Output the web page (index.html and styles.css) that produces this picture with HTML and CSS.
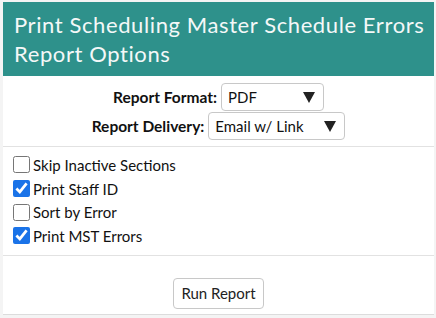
FILE: index.html
```html
<!DOCTYPE html>
<html>
<head>
<meta charset="utf-8">
<link rel="stylesheet" href="styles.css">
</head>
<body>
<div class="panel">
  <div class="header">Print Scheduling Master Schedule Errors<br>Report Options</div>
  <div class="options">
    <div class="row">
      <label class="lbl">Report Format:</label>
      <div class="sel sel-format"><span>PDF</span><span class="arrow"></span></div>
    </div>
    <div class="row">
      <label class="lbl">Report Delivery:</label>
      <div class="sel sel-delivery"><span>Email w/ Link</span><span class="arrow"></span></div>
    </div>
  </div>
  <div class="checks">
    <label class="check"><input type="checkbox"><span>Skip Inactive Sections</span></label>
    <label class="check"><input type="checkbox" checked><span>Print Staff ID</span></label>
    <label class="check"><input type="checkbox"><span>Sort by Error</span></label>
    <label class="check"><input type="checkbox" checked><span>Print MST Errors</span></label>
  </div>
  <div class="actions">
    <button class="btn">Run Report</button>
  </div>
</div>
</body>
</html>
```
FILE: styles.css
```css
html, body {
  margin: 0;
  padding: 0;
}
body {
  background: #f4f4f4;
  font-family: Lato, "Open Sans", sans-serif;
  color: #111;
}
.panel {
  margin: 2px 2px 0 3px;
  width: 431px;
  background: #fff;
  border-bottom: 1px solid #dcdcdc;
}
.header {
  background: #2e918b;
  color: #f4f8f8;
  font-size: 22px;
  line-height: 29px;
  padding: 8px 0 8px 11px;
  height: 58px;
  letter-spacing: 0.6px;
}
.options {
  padding: 7px 0 6px;
  border-bottom: 1px solid #e2e2e2;
  display: flex;
  flex-direction: column;
  align-items: center;
  gap: 1px;
}
.row {
  display: flex;
  align-items: center;
  gap: 4px;
}
.lbl {
  font-weight: bold;
  font-size: 15.5px;
}
.sel {
  box-sizing: border-box;
  height: 28px;
  border: 1px solid #c8c8c8;
  border-radius: 4px;
  display: flex;
  align-items: center;
  justify-content: space-between;
  padding: 0 8px 0 6px;
  font-size: 15px;
}
.sel-format { width: 103px; }
.sel-delivery { width: 137px; }
.arrow {
  width: 0;
  height: 0;
  border-left: 6px solid transparent;
  border-right: 6px solid transparent;
  border-top: 11px solid #222;
}
.checks {
  padding: 6px 0 7px 10px;
  border-bottom: 1px solid #e2e2e2;
  display: flex;
  flex-direction: column;
}
.check {
  display: flex;
  align-items: center;
  height: 23.7px;
  font-size: 15px;
}
.check input {
  width: 17px;
  height: 17px;
  margin: 0 3px 0 0;
  accent-color: #1a73e8;
}
.actions {
  display: flex;
  justify-content: center;
  padding: 22px 0 5px;
}
.btn {
  box-sizing: border-box;
  width: 91px;
  height: 31px;
  background: #fff;
  border: 1px solid #c8c8c8;
  border-radius: 4px;
  font-family: Lato, "Open Sans", sans-serif;
  font-size: 15px;
  color: #222;
  padding: 0;
}
```
